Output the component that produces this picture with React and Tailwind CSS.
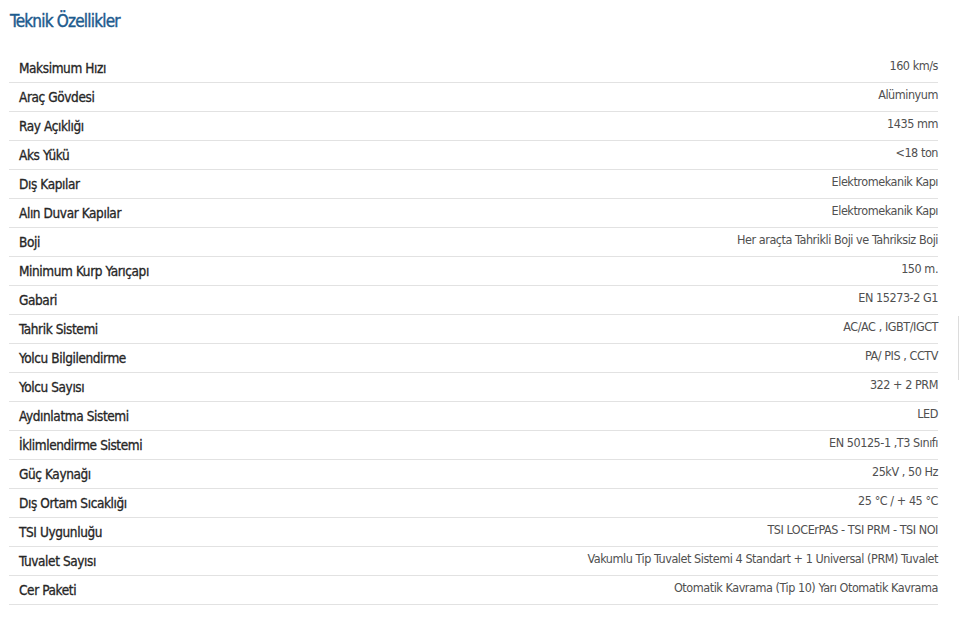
import React from "react";

const rows = [
  ["Maksimum Hızı", "160 km/s"],
  ["Araç Gövdesi", "Alüminyum"],
  ["Ray Açıklığı", "1435 mm"],
  ["Aks Yükü", "<18 ton"],
  ["Dış Kapılar", "Elektromekanik Kapı"],
  ["Alın Duvar Kapılar", "Elektromekanik Kapı"],
  ["Boji", "Her araçta Tahrikli Boji ve Tahriksiz Boji"],
  ["Minimum Kurp Yarıçapı", "150 m."],
  ["Gabari", "EN 15273-2 G1"],
  ["Tahrik Sistemi", "AC/AC , IGBT/IGCT"],
  ["Yolcu Bilgilendirme", "PA/ PIS , CCTV"],
  ["Yolcu Sayısı", "322 + 2 PRM"],
  ["Aydınlatma Sistemi", "LED"],
  ["İklimlendirme Sistemi", "EN 50125-1 ,T3 Sınıfı"],
  ["Güç Kaynağı", "25kV , 50 Hz"],
  ["Dış Ortam Sıcaklığı", "25 °C / + 45 °C"],
  ["TSI Uygunluğu", "TSI LOCErPAS - TSI PRM - TSI NOI"],
  ["Tuvalet Sayısı", "Vakumlu Tip Tuvalet Sistemi 4 Standart + 1 Universal (PRM) Tuvalet"],
  ["Cer Paketi", "Otomatik Kavrama (Tip 10) Yarı Otomatik Kavrama"],
];

export default function App() {
  return (
    <div className="relative w-[960px] h-[634px] bg-white overflow-hidden" style={{ fontFamily: '"DejaVu Sans Condensed", "Liberation Sans Narrow", sans-serif' }}>
      <h1 className="pl-[10px] pt-[10px] text-[17px] leading-[22px] font-normal text-[#1d5b8e] tracking-[-0.8px] [-webkit-text-stroke:0.4px_#1d5b8e]">
        Teknik Özellikler
      </h1>
      <div className="ml-[9px] w-[929px] mt-[22px]">
        {rows.map(([k, v]) => (
          <div key={k} className="flex justify-between h-[29px] border-b border-[#e2e2e2]">
            <div className="pl-[10px] pt-[6px] text-[13.5px] leading-[16px] font-normal text-[#262626] tracking-[-0.4px] [-webkit-text-stroke:0.3px_#262626]">{k}</div>
            <div className="pt-[4px] text-[12.5px] leading-[16px] text-[#505050] tracking-[-0.45px]">{v}</div>
          </div>
        ))}
      </div>
      <div className="absolute left-[958px] top-[316px] w-px h-[64px] bg-[#dcdcdc]" />
    </div>
  );
}
